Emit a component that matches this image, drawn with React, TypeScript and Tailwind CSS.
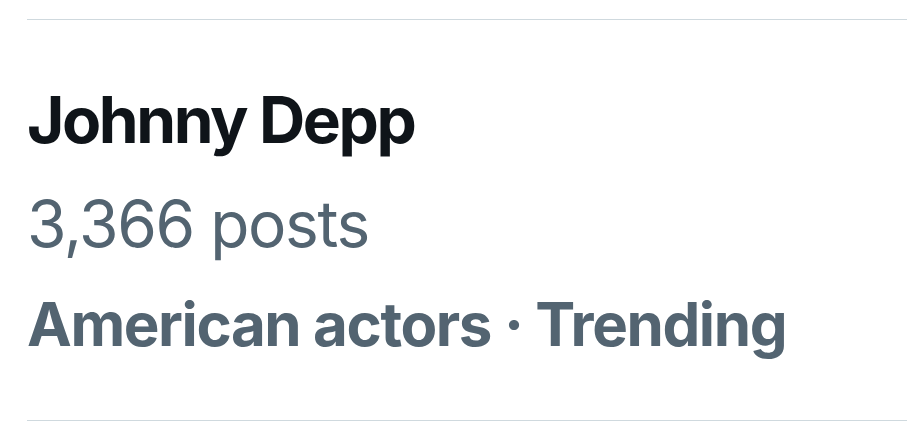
export default function App() {
  return (
    <div className="w-[907px] h-[429px] bg-white overflow-hidden" style={{ fontFamily: 'Inter, "Liberation Sans", sans-serif' }}>
      <div className="h-[19px]" />
      <div className="ml-[27px] border-t border-[#cfd9de]">
        <div className="pt-[60px] flex flex-col">
          <div className="text-[64px] leading-[80px] font-bold text-[#0f1419] tracking-[-2.4px]">Johnny Depp</div>
          <div className="mt-[24px] text-[64px] leading-[80px] font-normal text-[#536471] tracking-[-1.4px]">3,366 posts</div>
          <div className="mt-[22px] text-[60px] leading-[76px] font-bold text-[#536471] tracking-[-1.4px]">American actors · Trending</div>
        </div>
        <div className="mt-[58px] border-t border-[#cfd9de]" />
      </div>
    </div>
  );
}
